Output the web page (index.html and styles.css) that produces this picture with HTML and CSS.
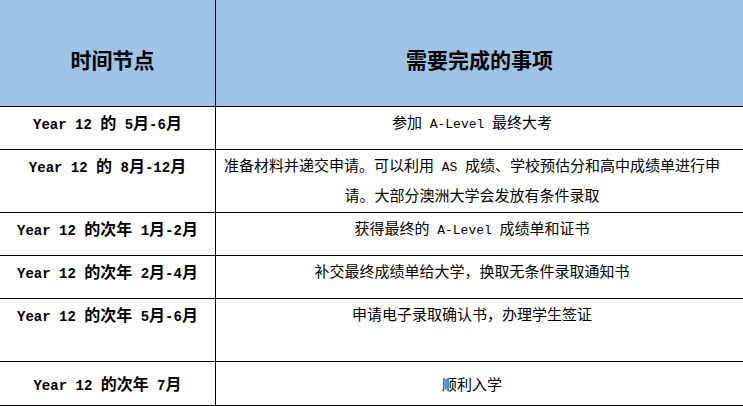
FILE: index.html
```html
<!DOCTYPE html>
<html lang="zh-CN">
<head>
<meta charset="utf-8">
<title>时间节点</title>
<link rel="stylesheet" href="styles.css">
</head>
<body>
<div class="schedule">
  <div class="cell head first">时间节点</div>
  <div class="cell head">需要完成的事项</div>

  <div class="cell when h43"><span class="lat">Year 12 </span>的<span class="lat"> 5</span>月<span class="lat">-6</span>月</div>
  <div class="cell what h43">参加<span class="lat"> A-Level </span>最终大考</div>

  <div class="cell when h63"><span class="lat">Year 12 </span>的<span class="lat"> 8</span>月<span class="lat">-12</span>月</div>
  <div class="cell what h63">准备材料并递交申请。可以利用<span class="lat"> AS </span>成绩、学校预估分和高中成绩单进行申请。大部分澳洲大学会发放有条件录取</div>

  <div class="cell when h43"><span class="lat">Year 12 </span>的次年<span class="lat"> 1</span>月<span class="lat">-2</span>月</div>
  <div class="cell what h43">获得最终的<span class="lat"> A-Level </span>成绩单和证书</div>

  <div class="cell when h43"><span class="lat">Year 12 </span>的次年<span class="lat"> 2</span>月<span class="lat">-4</span>月</div>
  <div class="cell what h43">补交最终成绩单给大学，换取无条件录取通知书</div>

  <div class="cell when h63"><span class="lat">Year 12 </span>的次年<span class="lat"> 5</span>月<span class="lat">-6</span>月</div>
  <div class="cell what h63">申请电子录取确认书，办理学生签证</div>

  <div class="cell when h44 mid"><span class="lat">Year 12 </span>的次年<span class="lat"> 7</span>月</div>
  <div class="cell what h44 mid">顺利入学</div>
</div>
</body>
</html>
```
FILE: styles.css
```css
html, body {
  margin: 0;
  padding: 0;
  background: #ffffff;
}

.schedule {
  display: grid;
  grid-template-columns: 216px 527px;
  width: 743px;
  font-family: "Noto Sans CJK SC", sans-serif;
  color: #000;
}

.cell {
  box-sizing: border-box;
  border-bottom: 1px solid #000;
  text-align: center;
  overflow: hidden;
}

.cell.head,
.cell.when {
  border-right: 1px solid #000;
}
.cell.head + .cell.head {
  border-right: none;
}

.head {
  height: 107px;
  background: #9dc3e6;
  font-size: 21px;
  font-weight: 700;
  line-height: 30px;
  padding-top: 44px;
}
.head.first {
  padding-left: 10px;
}

.when {
  font-size: 16px;
  font-weight: 700;
  line-height: 30px;
}

.what {
  font-size: 15px;
  line-height: 30px;
  padding: 0 21px 0 6px;
}

.lat {
  font-family: "Liberation Mono", monospace;
  line-height: 1;
}
.when .lat {
  font-size: 14px;
}
.what .lat {
  font-size: 13px;
}

.h43 { height: 43px; }
.h63 { height: 63px; }
.h44 { height: 44px; }

.mid {
  line-height: 43px;
}
```
